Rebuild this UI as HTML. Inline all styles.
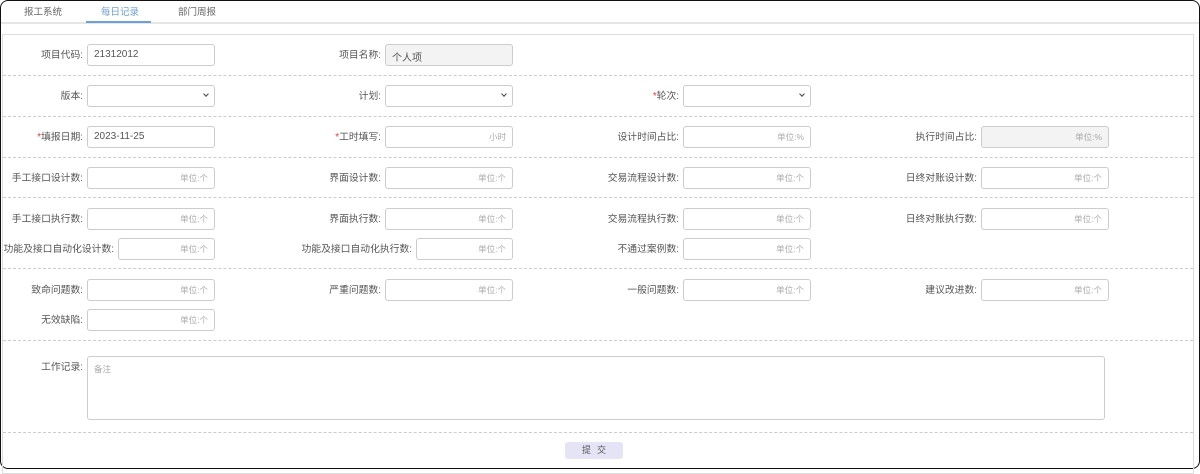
<!DOCTYPE html>
<html><head><meta charset="utf-8"><style>
*{box-sizing:border-box;margin:0;padding:0}
body{width:1200px;height:469px;background:#fff;font-family:"Liberation Sans","Noto Sans CJK SC",sans-serif;font-size:9.5px;color:#555;position:relative;overflow:hidden}
.frame{position:absolute;left:0;top:0;width:1200px;height:469px;border:1px solid #111;border-radius:8px}
.tab{position:absolute;top:4px;font-size:9.5px;color:#666}
.tabline{position:absolute;left:1px;right:1px;top:22px;height:2px;background:#e6e6e6}
.panel{position:absolute;left:2px;top:34px;width:1192px;height:440px;border:1px solid #ddd}
.dash{position:absolute;left:3px;width:1190px;border-top:1px dashed #ccc}
.f{position:absolute;width:128px;height:22px;border:1px solid #ccc;border-radius:3px;background:#fff}
.f .l{position:absolute;right:131px;top:2px;white-space:nowrap;color:#555;font-size:9.8px}
.f .u{position:absolute;right:6px;top:4px;color:#aaa;font-size:8.5px}
.f .v{position:absolute;left:6px;top:4px;color:#555;font-size:10px}
.f.g{background:#f3f3f3}
.f .c{position:absolute;right:6px;top:6px;width:4px;height:4px;border-right:1.5px solid #444;border-bottom:1.5px solid #444;transform:rotate(45deg)}
.r{color:#e33}
</style></head><body>
<div class="frame"></div>
<div class="tab" style="left:24px">报工系统</div>
<div class="tab" style="left:101px;color:#6d9fd8">每日记录</div>
<div style="position:absolute;left:86px;top:21px;width:65px;height:2px;background:#6d9fd8;z-index:2"></div>
<div class="tab" style="left:178px">部门周报</div>
<div class="tabline"></div>
<div class="panel"></div>
<div class="dash" style="top:75px"></div>
<div class="dash" style="top:116px"></div>
<div class="dash" style="top:157px"></div>
<div class="dash" style="top:197px"></div>
<div class="dash" style="top:268px"></div>
<div class="dash" style="top:340px"></div>
<div class="dash" style="top:432px"></div>

<div class="f" style="left:87px;top:44px"><span class="l">项目代码:</span><span class="v">21312012</span></div>
<div class="f g" style="left:385px;top:44px"><span class="l">项目名称:</span><span class="v">个人项</span></div>

<div class="f" style="left:87px;top:85px"><span class="l">版本:</span><i class="c"></i></div>
<div class="f" style="left:385px;top:85px"><span class="l">计划:</span><i class="c"></i></div>
<div class="f" style="left:683px;top:85px"><span class="l"><span class="r">*</span>轮次:</span><i class="c"></i></div>

<div class="f" style="left:87px;top:126px"><span class="l"><span class="r">*</span>填报日期:</span><span class="v">2023-11-25</span></div>
<div class="f" style="left:385px;top:126px"><span class="l"><span class="r">*</span>工时填写:</span><span class="u">小时</span></div>
<div class="f" style="left:683px;top:126px"><span class="l">设计时间占比:</span><span class="u">单位:%</span></div>
<div class="f g" style="left:981px;top:126px"><span class="l">执行时间占比:</span><span class="u">单位:%</span></div>

<div class="f" style="left:87px;top:167px"><span class="l">手工接口设计数:</span><span class="u">单位:个</span></div>
<div class="f" style="left:385px;top:167px"><span class="l">界面设计数:</span><span class="u">单位:个</span></div>
<div class="f" style="left:683px;top:167px"><span class="l">交易流程设计数:</span><span class="u">单位:个</span></div>
<div class="f" style="left:981px;top:167px"><span class="l">日终对账设计数:</span><span class="u">单位:个</span></div>

<div class="f" style="left:87px;top:208px"><span class="l">手工接口执行数:</span><span class="u">单位:个</span></div>
<div class="f" style="left:385px;top:208px"><span class="l">界面执行数:</span><span class="u">单位:个</span></div>
<div class="f" style="left:683px;top:208px"><span class="l">交易流程执行数:</span><span class="u">单位:个</span></div>
<div class="f" style="left:981px;top:208px"><span class="l">日终对账执行数:</span><span class="u">单位:个</span></div>

<div class="f" style="left:118px;top:238px;width:97px"><span class="l" style="right:100px">功能及接口自动化设计数:</span><span class="u">单位:个</span></div>
<div class="f" style="left:416px;top:238px;width:97px"><span class="l" style="right:100px">功能及接口自动化执行数:</span><span class="u">单位:个</span></div>
<div class="f" style="left:683px;top:238px"><span class="l">不通过案例数:</span><span class="u">单位:个</span></div>

<div class="f" style="left:87px;top:279px"><span class="l">致命问题数:</span><span class="u">单位:个</span></div>
<div class="f" style="left:385px;top:279px"><span class="l">严重问题数:</span><span class="u">单位:个</span></div>
<div class="f" style="left:683px;top:279px"><span class="l">一般问题数:</span><span class="u">单位:个</span></div>
<div class="f" style="left:981px;top:279px"><span class="l">建议改进数:</span><span class="u">单位:个</span></div>

<div class="f" style="left:87px;top:309px"><span class="l">无效缺陷:</span><span class="u">单位:个</span></div>

<div class="f" style="left:87px;top:356px;width:1018px;height:64px"><span class="l" style="right:1021px;top:2px">工作记录:</span><span style="position:absolute;left:6px;top:6px;color:#aaa;font-size:8.5px">备注</span></div>

<div style="position:absolute;left:565px;top:442px;width:58px;height:17px;background:#e4e4f6;border-radius:3px;text-align:center;font-size:9px;line-height:17px;color:#555;letter-spacing:6px;padding-left:6px">提交</div>
</body></html>
